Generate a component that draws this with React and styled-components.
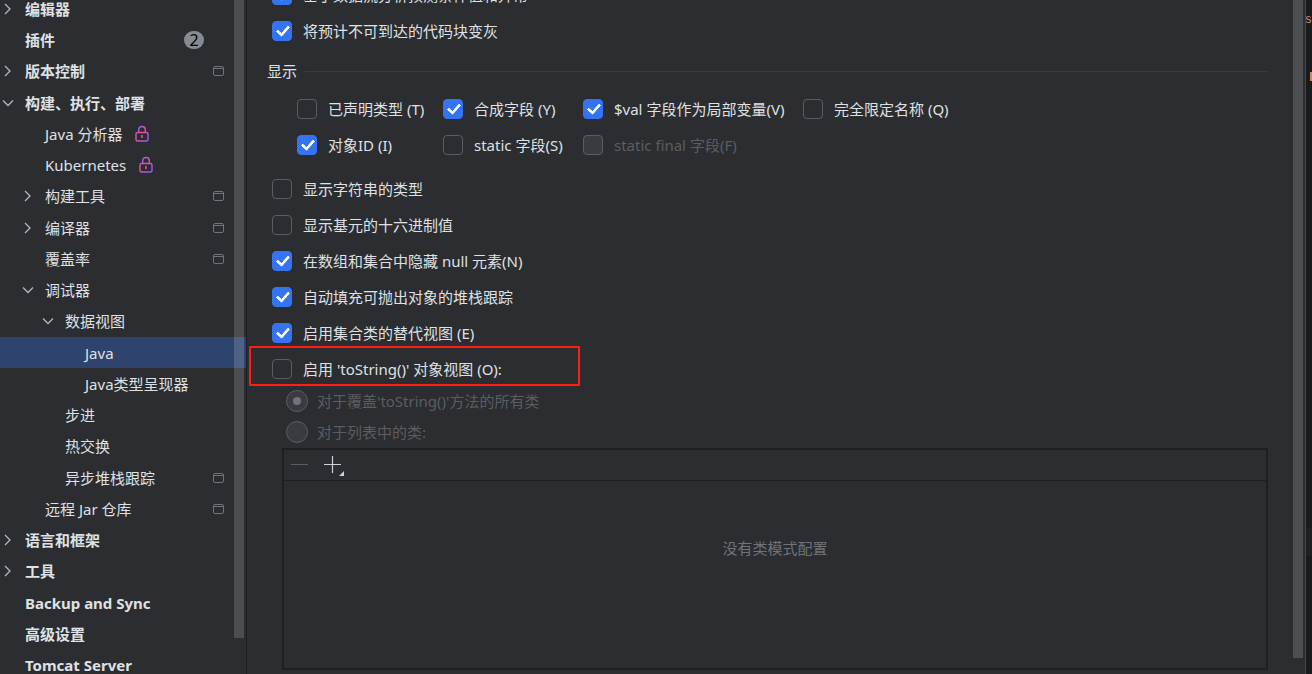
import { useState } from 'react';
import styled, { createGlobalStyle, css } from 'styled-components';

const treeItems = [
    { id: 'editor', label: '编辑器', level: 0, arrow: 'right' },
    { id: 'plugins', label: '插件', level: 0, count: 2 },
    { id: 'vcs', label: '版本控制', level: 0, arrow: 'right', project: true },
    { id: 'build', label: '构建、执行、部署', level: 0, arrow: 'down' },
    { id: 'profiler', label: 'Java 分析器', level: 1, locked: true },
    { id: 'k8s', label: 'Kubernetes', level: 1, locked: true },
    { id: 'buildTools', label: '构建工具', level: 1, arrow: 'right', project: true },
    { id: 'compiler', label: '编译器', level: 1, arrow: 'right', project: true },
    { id: 'coverage', label: '覆盖率', level: 1, project: true },
    { id: 'debugger', label: '调试器', level: 1, arrow: 'down' },
    { id: 'dataViews', label: '数据视图', level: 2, arrow: 'down' },
    { id: 'java', label: 'Java', level: 3 },
    { id: 'renderers', label: 'Java类型呈现器', level: 3 },
    { id: 'stepping', label: '步进', level: 2 },
    { id: 'hotswap', label: '热交换', level: 2 },
    { id: 'async', label: '异步堆栈跟踪', level: 2, project: true },
    { id: 'jars', label: '远程 Jar 仓库', level: 1, project: true },
    { id: 'languages', label: '语言和框架', level: 0, arrow: 'right' },
    { id: 'tools', label: '工具', level: 0, arrow: 'right' },
    { id: 'backup', label: 'Backup and Sync', level: 0 },
    { id: 'advanced', label: '高级设置', level: 0 },
    { id: 'tomcat', label: 'Tomcat Server', level: 0 },
];

const topOptions = [
    { id: 'dataflow', label: '基于数据流分析预测条件值和异常' },
    { id: 'unreachable', label: '将预计不可到达的代码块变灰' },
];

const fieldOptions = [
    { id: 'declared', label: '已声明类型 (T)' },
    { id: 'synthetic', label: '合成字段 (Y)' },
    { id: 'val', label: '$val 字段作为局部变量(V)' },
    { id: 'qualified', label: '完全限定名称 (Q)' },
    { id: 'objectId', label: '对象ID (I)' },
    { id: 'static', label: 'static 字段(S)' },
    { id: 'staticFinal', label: 'static final 字段(F)', disabled: true },
];

const viewOptions = [
    { id: 'stringType', label: '显示字符串的类型' },
    { id: 'hex', label: '显示基元的十六进制值' },
    { id: 'hideNull', label: '在数组和集合中隐藏 null 元素(N)' },
    { id: 'stackTraces', label: '自动填充可抛出对象的堆栈跟踪' },
    { id: 'collections', label: '启用集合类的替代视图 (E)' },
    { id: 'objectView', label: "启用 'toString()' 对象视图 (O):", marked: true },
];

const initialChecks = {
    dataflow: true,
    unreachable: true,
    synthetic: true,
    val: true,
    objectId: true,
    hideNull: true,
    stackTraces: true,
    collections: true,
};

function Arrow({ dir }) {
    return (
        <svg width="12" height="12" viewBox="0 0 12 12" fill="none" stroke="#b4b8bf" strokeWidth="1.3">
            <path d={dir === 'down' ? 'M1 3.5 L6 8.5 L11 3.5' : 'M3 1 L8 6 L3 11'} />
        </svg>
    );
}

function LockIcon() {
    return (
        <svg width="16" height="18" viewBox="0 0 16 18" fill="none">
            <defs>
                <linearGradient id="lock" gradientUnits="userSpaceOnUse" x1="3" y1="4" x2="14" y2="15">
                    <stop offset="0" stopColor="#9a5cf5" />
                    <stop offset="0.35" stopColor="#e8558f" />
                    <stop offset="0.6" stopColor="#cc50d8" />
                    <stop offset="1" stopColor="#8c5cff" />
                </linearGradient>
            </defs>
            <rect x="2" y="7.5" width="12" height="8.5" rx="1.5" stroke="url(#lock)" strokeWidth="1.4" />
            <path d="M4.7 7.5 V4.8 A3.3 3.3 0 0 1 11.3 4.8 V7.5" stroke="url(#lock)" strokeWidth="1.4" />
            <path d="M8 10 V13" stroke="#e0559a" strokeWidth="1.6" />
        </svg>
    );
}

function ProjectIcon() {
    return (
        <svg width="11" height="10" viewBox="0 0 11 10" fill="none" stroke="#6f737a">
            <rect x="0.5" y="0.5" width="10" height="9" rx="1.5" />
            <path d="M1 2.5 H10" />
        </svg>
    );
}

function Check({ option, checks, onToggle }) {
    return (
        <CheckLabel $disabled={option.disabled} $marked={option.marked}>
            <CheckInput
                type="checkbox"
                checked={!!checks[option.id]}
                disabled={option.disabled}
                onChange={() => onToggle(option.id)}
            />
            {option.label}
        </CheckLabel>
    );
}

function App() {
    const [selected, setSelected] = useState('java');
    const [checks, setChecks] = useState(initialChecks);
    const [scope, setScope] = useState('all');

    const toggle = (id) => setChecks({ ...checks, [id]: !checks[id] });

    return (
        <>
            <GlobalStyle />
            <Window>
                <Sidebar>
                    <Tree>
                        {treeItems.map((item) => (
                            <TreeItem key={item.id}>
                                <TreeButton
                                    type="button"
                                    $level={item.level}
                                    $selected={item.id === selected}
                                    onClick={() => setSelected(item.id)}
                                >
                                    <ArrowSlot>{item.arrow && <Arrow dir={item.arrow} />}</ArrowSlot>
                                    <span>{item.label}</span>
                                    {item.locked && <LockIcon />}
                                    {item.count && <Count>{item.count}</Count>}
                                    {item.project && <ProjectSlot><ProjectIcon /></ProjectSlot>}
                                </TreeButton>
                            </TreeItem>
                        ))}
                    </Tree>
                    <ScrollThumb $end={36} />
                </Sidebar>
                <Content>
                    <Options>
                        {topOptions.map((o) => <Check key={o.id} option={o} checks={checks} onToggle={toggle} />)}
                    </Options>
                    <SectionTitle>显示</SectionTitle>
                    <FieldGrid>
                        {fieldOptions.map((o) => <Check key={o.id} option={o} checks={checks} onToggle={toggle} />)}
                    </FieldGrid>
                    <Options>
                        {viewOptions.map((o) => <Check key={o.id} option={o} checks={checks} onToggle={toggle} />)}
                    </Options>
                    <Radios>
                        <RadioLabel>
                            <RadioInput type="radio" name="scope" disabled checked={scope === 'all'} onChange={() => setScope('all')} />
                            对于覆盖'toString()'方法的所有类
                        </RadioLabel>
                        <RadioLabel>
                            <RadioInput type="radio" name="scope" disabled checked={scope === 'list'} onChange={() => setScope('list')} />
                            对于列表中的类:
                        </RadioLabel>
                    </Radios>
                    <ClassList>
                        <Toolbar>
                            <ToolButton type="button" aria-label="Remove" disabled>
                                <svg width="24" height="24" viewBox="0 0 24 24" stroke="#5a5d63">
                                    <path d="M3 11.5 H20" />
                                </svg>
                            </ToolButton>
                            <ToolButton type="button" aria-label="Add">
                                <svg width="24" height="24" viewBox="0 0 24 24" stroke="#ced0d6">
                                    <path d="M3 11.5 H20 M11.5 3 V20" strokeWidth="1.2" />
                                    <path d="M23 18 V23 H18 Z" fill="#ced0d6" stroke="none" />
                                </svg>
                            </ToolButton>
                        </Toolbar>
                        <EmptyText>没有类模式配置</EmptyText>
                    </ClassList>
                    <ScrollThumb $end={16} />
                </Content>
                <EditorEdge>
                    <CodeEnd>s</CodeEnd>
                    <EditorCaret />
                    <EditorLine />
                </EditorEdge>
            </Window>
        </>
    );
}

const GlobalStyle = createGlobalStyle`
*, *::before, *::after {
    box-sizing: border-box;
}
body {
    margin: 0;
    background: #2b2d30;
    color: #dfe1e5;
    font-family: 'Noto Sans', 'Noto Sans CJK SC', sans-serif;
    font-size: 15px;
    line-height: 20px;
}
button {
    font: inherit;
    color: inherit;
    background: none;
    border: none;
    padding: 0;
}
`

const Window = styled.div`
    display: flex;
    height: 100vh;
    overflow: hidden;
`

const Sidebar = styled.nav`
    position: relative;
    flex: none;
    width: 247px;
    border-right: 1px solid #1e1f22;
    overflow: hidden;
`

const Tree = styled.ul`
    list-style: none;
    margin: -7px 0 0;
    padding: 0;
`

const TreeItem = styled.li`
    height: 31px;
    &:nth-child(4n + 3) {
        height: 32px;
    }
`

const TreeButton = styled.button`
    display: flex;
    align-items: center;
    width: 100%;
    height: 31px;
    padding: 0 22px 0 ${({ $level }) => $level * 20}px;
    white-space: nowrap;
    text-align: left;
    font-weight: ${({ $level }) => ($level === 0 ? 700 : 400)};
    background: ${({ $selected }) => ($selected ? '#2e436e' : 'transparent')};
    > span + svg {
        margin-left: 12px;
    }
`

const ArrowSlot = styled.span`
    display: flex;
    flex: none;
    width: 25px;
    padding-left: 2px;
`

const Count = styled.span`
    width: 20px;
    height: 18px;
    margin: 0 20px 0 auto;
    border-radius: 9px;
    background: #868a91;
    color: #000;
    font-size: 16px;
    font-weight: 400;
    line-height: 18px;
    text-align: center;
`

const ProjectSlot = styled.span`
    display: flex;
    margin-left: auto;
`

const ScrollThumb = styled.div`
    position: absolute;
    top: 0;
    right: 2px;
    bottom: ${({ $end }) => $end}px;
    width: 10px;
    background: rgba(255, 255, 255, 0.16);
`

const Content = styled.main`
    position: relative;
    flex: 1;
    min-width: 0;
    padding: 0 37px 0 20px;
    border-right: 1px solid #43454a;
    overflow: hidden;
`

const Options = styled.div`
    display: flex;
    flex-direction: column;
    align-items: flex-start;
    gap: 16px;
    padding-left: 5px;
    &:first-child {
        margin-top: -15px;
    }
`

const CheckLabel = styled.label`
    position: relative;
    display: flex;
    align-items: center;
    gap: 11px;
    white-space: nowrap;
    color: ${({ $disabled }) => ($disabled ? '#5a5d63' : 'inherit')};
    ${({ $marked }) => $marked && css`
        &::after {
            content: '';
            position: absolute;
            top: -13px;
            bottom: -7px;
            left: -23px;
            width: 331px;
            border: 2px solid #ff1f12;
            border-radius: 1px;
            pointer-events: none;
        }
    `}
`

const CheckInput = styled.input`
    appearance: none;
    display: grid;
    place-items: center;
    flex: none;
    width: 20px;
    height: 20px;
    margin: 0;
    border: 1px solid #5a5d63;
    border-radius: 4px;
    &:checked {
        border-color: #3574f0;
        background: #3574f0;
    }
    &:checked::after {
        content: '';
        width: 8px;
        height: 13px;
        margin: 0 0 3px 1px;
        border: solid #fff;
        border-width: 0 3px 3px 0;
        border-radius: 1px;
        transform: rotate(42deg);
    }
    &:disabled {
        background: #393b40;
    }
`

const SectionTitle = styled.h2`
    display: flex;
    align-items: center;
    gap: 8px;
    margin: 20px 0 18px;
    font-size: 15px;
    font-weight: 400;
    &::after {
        content: '';
        flex: 1;
        border-top: 1px solid #393b40;
    }
`

const FieldGrid = styled.div`
    display: grid;
    grid-template-columns: 146px 140px 220px auto;
    row-gap: 16px;
    margin-bottom: 24px;
    padding-left: 30px;
`

const Radios = styled.div`
    display: flex;
    flex-direction: column;
    align-items: flex-start;
    gap: 9px;
    margin: 11px 0 5px;
    padding-left: 19px;
`

const RadioLabel = styled.label`
    display: flex;
    align-items: center;
    gap: 9px;
    color: #5a5d63;
`

const RadioInput = styled.input`
    appearance: none;
    display: grid;
    place-items: center;
    flex: none;
    width: 22px;
    height: 22px;
    margin: 0;
    border: 1px solid #5a5d63;
    border-radius: 50%;
    background: #393b40;
    &:checked::after {
        content: '';
        width: 8px;
        height: 8px;
        border-radius: 50%;
        background: #6f737a;
    }
`

const ClassList = styled.section`
    display: flex;
    flex-direction: column;
    min-height: 222px;
    margin-left: 15px;
    border: 2px solid #1e1f22;
`

const Toolbar = styled.div`
    display: flex;
    gap: 9px;
    padding: 3px 4px;
    border-bottom: 1px solid #1e1f22;
`

const ToolButton = styled.button`
    display: flex;
`

const EmptyText = styled.p`
    margin: 57px 0 0;
    text-align: center;
    color: #6f737a;
`

const EditorEdge = styled.div`
    display: flex;
    flex-direction: column;
    align-items: flex-end;
    flex: none;
    width: 6px;
    padding-top: 10px;
    background: #191a1c;
    overflow: hidden;
`

const CodeEnd = styled.code`
    height: 20px;
    color: #cf8e6d;
    font-family: 'Liberation Mono', monospace;
    font-size: 12px;
`

const EditorCaret = styled.div`
    width: 2px;
    height: 9px;
    margin-top: 42px;
    background: #c98a5e;
`

const EditorLine = styled.div`
    width: 100%;
    height: 28px;
    margin-top: 447px;
    background: #1f2024;
`

export default App;
